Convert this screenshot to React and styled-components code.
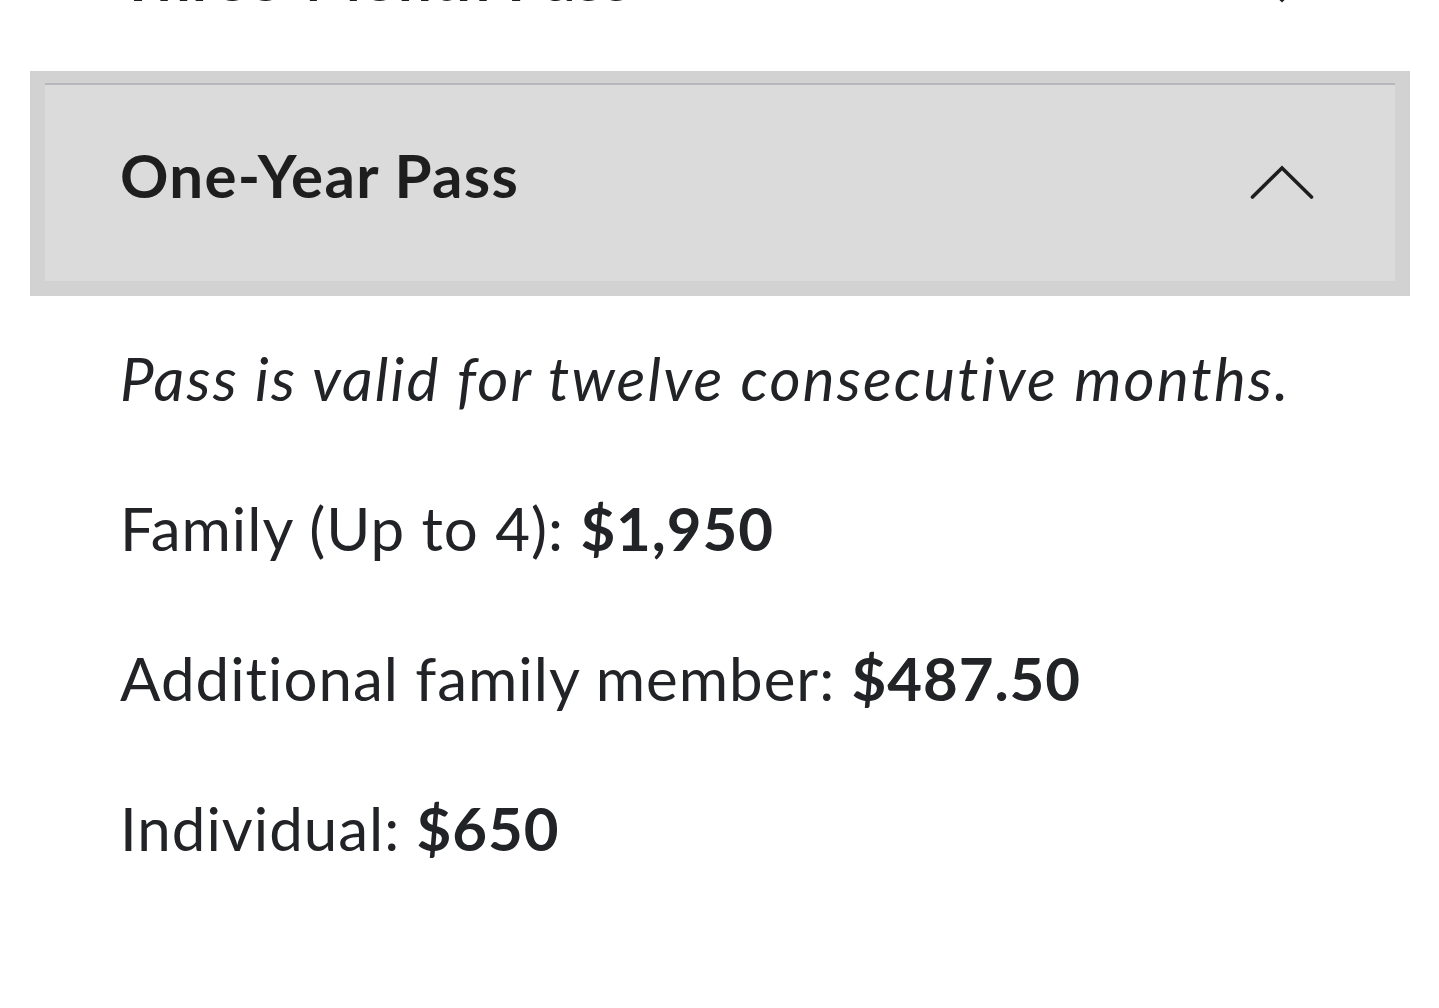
import React, { useState } from 'react';
import styled, { createGlobalStyle } from 'styled-components';

const GlobalStyle = createGlobalStyle`
  html, body {
    margin: 0;
    padding: 0;
    background: #ffffff;
    overflow: hidden;
  }
  body {
    font-family: Lato, "Noto Sans", sans-serif;
    color: #202124;
    font-variant-ligatures: none;
  }
`;

const Page = styled.div`
  width: 1439px;
  height: 1008px;
  overflow: hidden;
`;

const List = styled.div`
  margin-top: -115px;
  padding: 0 44px 0 45px;
  display: flex;
  flex-direction: column;
`;

const Item = styled.section`
  display: flex;
  flex-direction: column;
`;

// focus ring: 12px on top, 15px on the other sides
const ring = '#d2d2d2';

const Header = styled.button`
  all: unset;
  box-sizing: border-box;
  width: 100%;
  height: 198px;
  display: flex;
  align-items: center;
  justify-content: space-between;
  padding: 0 81px 0 75px;
  background: ${(p) => (p.$open ? '#dbdbdb' : 'transparent')};
  border-top: 2px solid ${(p) => (p.$open ? '#b6b7ba' : 'transparent')};
  box-shadow: ${(p) =>
    p.$open
      ? `0 0 0 12px ${ring}, 3px 3px 0 12px ${ring}, -3px 3px 0 12px ${ring}, 3px 0 0 12px ${ring}, -3px 0 0 12px ${ring}`
      : 'none'};
  cursor: pointer;
`;

const Title = styled.h3`
  margin: 0 0 ${(p) => (p.$open ? '16px' : '14px')};
  font-family: Lato, "Noto Sans", sans-serif;
  font-size: 60px;
  line-height: 72px;
  font-weight: 700;
  letter-spacing: 1.3px;
  color: #1e1e1e;
`;

const Chevron = styled.svg`
  width: 64px;
  height: 36px;
  flex: none;
  transform: ${(p) => (p.$open ? 'none' : 'rotate(180deg)')};
`;

const Panel = styled.div`
  padding: 61px 0 0 75px;
  display: flex;
  flex-direction: column;
  gap: 78px;
`;

const Line = styled.p`
  margin: 0;
  font-size: 60px;
  line-height: 72px;
  font-style: ${(p) => (p.$italic ? 'italic' : 'normal')};
  letter-spacing: ${(p) => (p.$italic ? '2.2px' : '1px')};
  color: #212326;
`;

const Price = styled.strong`
  font-weight: 700;
  letter-spacing: 0.9px;
`;

const passes = [
  {
    name: 'Three-Month Pass',
    note: 'Pass is valid for three consecutive months.',
    prices: [],
  },
  {
    name: 'One-Year Pass',
    note: 'Pass is valid for twelve consecutive months.',
    prices: [
      ['Family (Up to 4):', '$1,950'],
      ['Additional family member:', '$487.50'],
      ['Individual:', '$650'],
    ],
  },
];

function App() {
  const [openIndex, setOpenIndex] = useState(1);

  return (
    <Page>
      <GlobalStyle />
      <List>
        {passes.map((pass, i) => {
          const open = openIndex === i;
          return (
            <Item key={pass.name}>
              <Header $open={open} onClick={() => setOpenIndex(open ? -1 : i)}>
                <Title $open={open}>{pass.name}</Title>
                <Chevron $open={open} viewBox="0 0 64 36">
                  <polyline
                    points="2.5,32 32,3 61.5,32"
                    fill="none"
                    stroke="#1e1e1e"
                    strokeWidth="3.6"
                    strokeLinecap="round"
                    strokeLinejoin="miter"
                  />
                </Chevron>
              </Header>
              {open && (
                <Panel>
                  <Line $italic>{pass.note}</Line>
                  {pass.prices.map(([label, value]) => (
                    <Line key={label}>
                      {label} <Price>{value}</Price>
                    </Line>
                  ))}
                </Panel>
              )}
            </Item>
          );
        })}
      </List>
    </Page>
  );
}

export default App;
